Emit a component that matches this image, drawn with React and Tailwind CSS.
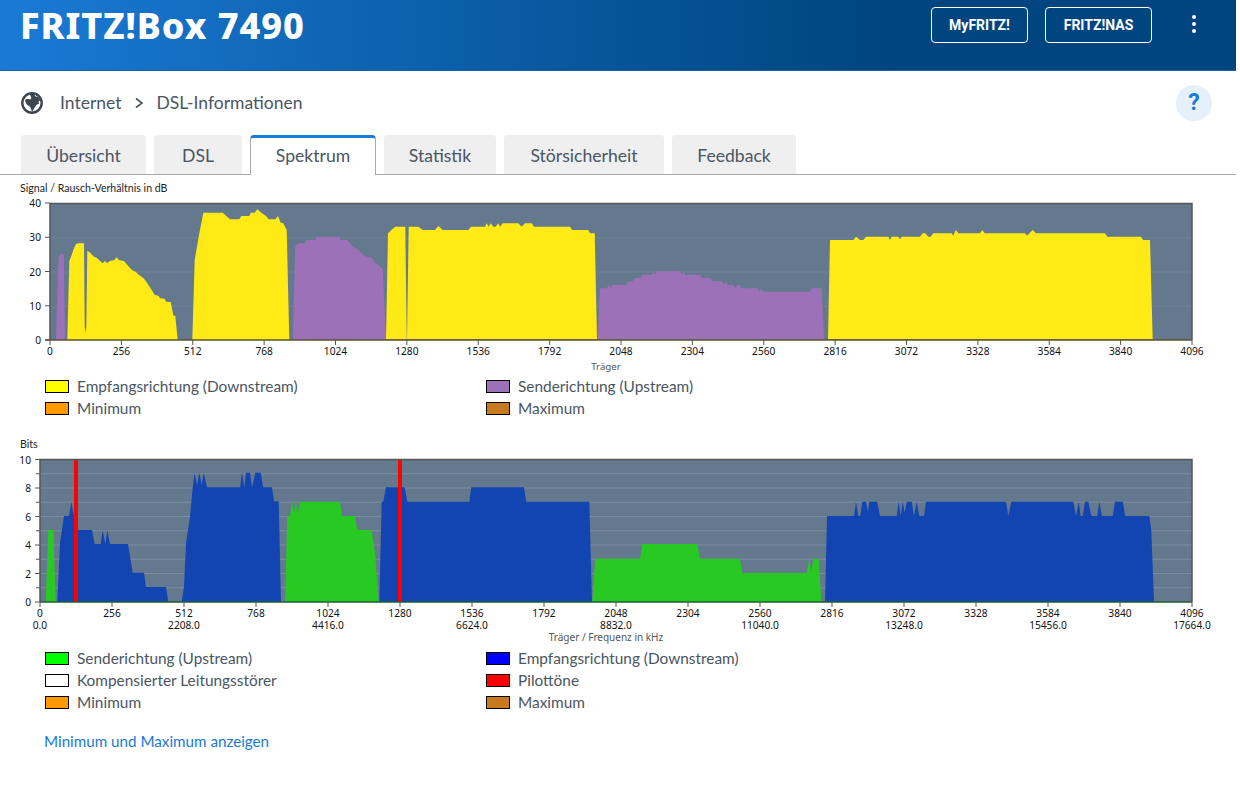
const z = (ox, oy, s) =>
  s.trim().split(/\s+/).map((p) => {
    const [x, y] = p.split(",").map(Number);
    return `${(ox + x / 3).toFixed(1)},${(oy + y / 3).toFixed(1)}`;
  }).join(" ");

const YEL = "#ffea16";
const PUR = "#9d71b8";
const BLU = "#1345b2";
const GRN = "#29c923";
const BG = "#64798e";
const GRID = "#7b8c9e";

const chart1 = [
  [PUR, z(0, 180, "168,480 176,230 182,222 191,222 195,480")],
  [YEL, z(0, 180, "202,480 208,243 214,228 222,205 228,192 234,190 252,190 254,440 257,460 259,440 262,212 268,216 274,222 282,230 290,233 298,241 308,250 314,243 322,249 330,243 342,241 350,232 358,241 372,243 382,255 396,270 408,276 414,283 430,294 438,304 450,322 464,344 476,348 480,355 494,356 498,365 512,366 520,406 526,408 533,480")],
  [YEL, z(0, 180, "577,480 584,240 596,170 610,98 668,98 690,118 718,118 724,108 748,108 752,98 764,98 772,88 786,100 798,108 806,118 826,118 834,108 842,128 850,130 860,150 868,480")],
  [PUR, z(0, 180, "878,480 886,200 892,192 900,190") + " " + z(300, 190, "0,160 15,160 20,150 45,150 50,140 118,140 122,150 140,150 160,170 175,180 190,195 200,200 215,203 225,220 235,224 248,238 258,448")],
  [YEL, z(300, 190, "258,448 264,130 272,122 285,110 316,110 320,448 321,448 326,110 355,110 368,120 405,120 415,108 428,120 505,120 513,110 555,110 560,100 566,110 572,100 580,110 587,110 595,100 600,110 608,100 655,100 665,110 675,100 695,100 702,110 810,110 817,120 865,120 870,130 884,130 891,448")],
  [PUR, z(300, 190, "893,448 900,295") + " " + z(600, 190, "0,295 20,295 27,285 33,292 38,285 78,285 85,274 98,274 105,264 122,264 128,254 155,254 160,246 165,254 172,244 240,244 246,254 250,246 256,254 300,254 305,264 332,264 338,274 365,274 372,284 377,276 384,285 400,286 406,295 412,285 420,285 425,295 472,295 478,305 483,297 492,305 630,305 636,295 665,295 672,448")],
  [YEL, z(600, 190, "684,448 690,150 760,150 768,140 780,150 790,150 798,140 865,140 870,150 875,140 895,140 900,148 905,140") + " " + z(900, 195, "0,125 60,125 68,115 76,115 85,125 92,125 100,115 155,115 160,122 167,105 175,115 240,115 247,105 254,115 375,115 381,122 398,105 408,115 615,115 622,125 722,125 730,135 750,135 758,433")],
];

const chart2 = [
  [GRN, z(0, 440, "137,486 145,270 160,270 167,486")],
  [BLU, z(0, 440, "172,486 180,310 192,228 207,228 214,185 222,228 234,270 276,270 284,312 302,312 308,270 316,312 322,270 330,312 384,312 398,398 432,398 438,441 498,441 505,486")],
  [BLU, z(0, 440, "545,486 552,440 558,310 570,230 578,142 584,98 591,135 598,98 605,135 611,98 621,142 720,142 726,98 733,142 738,98 750,98 756,142 766,98 782,98 790,142 816,142 822,184 836,184 843,486")],
  [GRN, z(0, 440, "855,486 862,228 870,228 876,185 882,218 888,185 894,218 900,185") + " " + z(300, 440, "0,185 120,185 126,228 165,228 172,270 215,270 225,340 236,486")],
  [BLU, z(300, 440, "238,486 245,185 250,185 258,142 314,142 322,185 508,185 514,142 672,142 679,185 868,185 876,486")],
  [GRN, z(580, 520, "37,246 46,116 180,116 187,72 352,72 360,116 480,116 487,159 680,159 687,118 694,155 700,116 716,116 724,246")],
  [BLU, z(800, 440, "75,486 81,228 162,228 168,185 175,228 181,228 187,185 198,185 204,215 208,185 232,185 240,228 290,228 296,185 302,228 308,185 314,218 320,185 335,185 342,228 350,185 358,228 372,228 378,185 618,185 625,228 634,185 820,185 828,228 836,185 842,228 848,228 855,185 865,185 874,228 892,228 898,185 906,228 938,228 945,185 968,185 976,228 1048,228 1054,270 1062,486")],
];

const AXIS_FONT = { fontFamily: "'Noto Sans', sans-serif", fontSize: 10.2, fill: "#111" };
const carriers = Array.from({ length: 17 }, (_, i) => i * 256);

function Chart1() {
  const top = 190;
  const X = (v) => 50 + (v / 4096) * 1142;
  const Y = (v) => 340 - v * 3.425;
  return (
    <svg width="1236" height="185" viewBox={`0 ${top} 1236 185`} className="block">
      <rect x="50" y="203" width="1142" height="137" fill={BG} />
      {[10, 20, 30].map((v) => (
        <line key={v} x1="50" x2="1192" y1={Y(v) + 0.5} y2={Y(v) + 0.5} stroke="#718497" />
      ))}
      {chart1.map(([c, p], i) => <polygon key={i} points={p} fill={c} />)}
      <path d="M50 340V203.5H1192V340" fill="none" stroke="#555" strokeWidth="1.5" />
      <line x1="45" x2="1192" y1="340" y2="340" stroke="#5b5330" strokeWidth="1.5" />
      {[0, 10, 20, 30, 40].map((v) => (
        <g key={v}>
          <line x1="45" x2="50" y1={Y(v)} y2={Y(v)} stroke="#555" />
          <text x="41" y={Y(v) + 4} textAnchor="end" style={AXIS_FONT}>{v}</text>
        </g>
      ))}
      {carriers.map((v) => (
        <g key={v}>
          <line x1={X(v)} x2={X(v)} y1="340" y2="345" stroke="#555" />
          <text x={X(v)} y="355" textAnchor="middle" style={AXIS_FONT}>{v}</text>
        </g>
      ))}
      <text x="606" y="370" textAnchor="middle" style={{ ...AXIS_FONT, fontSize: 9.7, fill: "#555" }}>Träger</text>
    </svg>
  );
}

function Chart2() {
  const top = 452;
  const X = (v) => 40 + (v / 4096) * 1152;
  const Y = (v) => 602 - v * 14.25;
  return (
    <svg width="1236" height="195" viewBox={`0 ${top} 1236 195`} className="block">
      <rect x="40" y="459" width="1152" height="143" fill={BG} />
      {[1, 2, 3, 4, 5, 6, 7, 8, 9].map((v) => (
        <line key={v} x1="40" x2="1192" y1={Y(v)} y2={Y(v)} stroke={GRID} />
      ))}
      {chart2.map(([c, p], i) => <polygon key={i} points={p} fill={c} />)}
      <rect x="74" y="459" width="4" height="143" fill="#ff0000" />
      <rect x="398" y="459" width="4" height="143" fill="#ff0000" />
      <path d="M40 602V459.5H1192V602" fill="none" stroke="#555" strokeWidth="1.5" />
      <line x1="40" x2="1192" y1="602" y2="602" stroke="#1d5c35" strokeWidth="1.5" />
      {[0, 1, 2, 3, 4, 5, 6, 7, 8, 9, 10].map((v) => (
        <line key={v} x1={v % 2 ? 36 : 35} x2="40" y1={Y(v)} y2={Y(v)} stroke="#555" />
      ))}
      {[0, 2, 4, 6, 8, 10].map((v) => (
        <text key={v} x="31" y={Y(v) + 4} textAnchor="end" style={AXIS_FONT}>{v}</text>
      ))}
      {carriers.map((v) => (
        <g key={v}>
          <line x1={X(v)} x2={X(v)} y1="602" y2="607" stroke="#555" />
          <text x={X(v)} y="617" textAnchor="middle" style={AXIS_FONT}>{v}</text>
        </g>
      ))}
      {carriers.filter((v) => v % 512 === 0).map((v) => (
        <text key={v} x={X(v)} y="629" textAnchor="middle" style={AXIS_FONT}>{(v * 4.3125).toFixed(1)}</text>
      ))}
      <text x="606" y="641" textAnchor="middle" style={{ ...AXIS_FONT, fontSize: 10, fill: "#555" }}>Träger / Frequenz in kHz</text>
    </svg>
  );
}

function Legend({ rows }) {
  return (
    <div className="grid grid-cols-[441px_1fr] pl-[45px] text-[15.4px] leading-[22px] text-[#4a5662]">
      {rows.map(([color, label]) => (
        <div key={label} className="flex items-center h-[22px]">
          <span className="w-[24px] h-[13px] border border-black shrink-0 mr-[8px]" style={{ backgroundColor: color }} />
          <span>{label}</span>
        </div>
      ))}
    </div>
  );
}

const tabs = [
  ["Übersicht", "w-[125px]"],
  ["DSL", "w-[88px]"],
  ["Spektrum", "w-[126px]"],
  ["Statistik", "w-[112px]"],
  ["Störsicherheit", "w-[160px]"],
  ["Feedback", "w-[124px]"],
];

export default function App() {
  return (
    <div className="w-[1236px] h-[794px] overflow-hidden bg-white font-['Lato',sans-serif] text-[#4a5662]">
      <header className="h-[71px] flex items-start justify-between bg-gradient-to-r from-[#1a7ad6] to-[#00457f] to-[72%] border-b border-[#1560a8]">
        <div className="pl-[20px] pt-[5px] text-[36px] leading-[42px] font-extrabold text-white font-['Noto_Sans',sans-serif] tracking-[0.95px]">FRITZ!Box 7490</div>
        <div className="flex items-center pt-[7px] pr-[38px]">
          <button className="w-[97px] h-[36px] rounded border border-white text-white text-[14px] font-bold font-['Roboto',sans-serif]">MyFRITZ!</button>
          <button className="ml-[17px] w-[107px] h-[36px] rounded border border-white text-white text-[14px] font-bold font-['Roboto',sans-serif]">FRITZ!NAS</button>
          <div className="ml-[38px] w-[8px] flex flex-col items-center gap-[3px] -mt-[2px]">
            <span className="w-[4px] h-[4px] rounded-full bg-white" />
            <span className="w-[4px] h-[4px] rounded-full bg-white" />
            <span className="w-[4px] h-[4px] rounded-full bg-white" />
          </div>
        </div>
      </header>

      <div className="h-[64px] flex items-center justify-between pl-[21px] pr-[24px]">
        <div className="flex items-center text-[17.5px]">
          <svg width="22" height="22" viewBox="0 0 22 22" className="mr-[17px]">
            <circle cx="11" cy="11" r="9.7" fill="#fff" stroke="#3d4650" strokeWidth="2.4" />
            <path d="M4 8 C6 6 8 8 10 7 C11 5 9 4 9 2 L14 2 C13 4 15 5 17 5 L20 9 C18 8 17 10 18 12 C16 12 15 13 14 15 C13 17 12 18 11 20 C10 18 10 15 8 14 C6 13 5 12 4 8Z" fill="#3d4650" />
          </svg>
          <span>Internet</span>
          <svg width="10" height="12" viewBox="0 0 10 12" className="ml-[13px] mr-[12px]">
            <path d="M2 1.5 L8 6 L2 10.5" fill="none" stroke="#4a5662" strokeWidth="1.6" />
          </svg>
          <span>DSL-Informationen</span>
        </div>
        <div className="w-[36px] h-[36px] rounded-full bg-[#e5f0fa] flex items-center justify-center text-[#1a7ad6] text-[23px] font-bold font-['Roboto',sans-serif]">?</div>
      </div>

      <nav className="h-[40px] flex items-end gap-[8px] pl-[21px] border-b border-[#aaaaaa]">
        {tabs.map(([t, w]) =>
          t === "Spektrum" ? (
            <div key={t} className={`${w} h-[40px] -mb-px bg-white border-x border-[#aaaaaa] border-t-[3px] border-t-[#1a7ad6] rounded-t flex items-center justify-center text-[17.6px] pb-[1px]`}>{t}</div>
          ) : (
            <div key={t} className={`${w} h-[39px] bg-[#efefef] rounded-t flex items-center justify-center text-[17.6px] pt-[3px]`}>{t}</div>
          )
        )}
      </nav>

      <div className="h-[15px] pl-[20px] pt-[6px] text-[10.6px] leading-[14px] text-[#222]">Signal / Rausch-Verhältnis in dB</div>
      <Chart1 />
      <Legend rows={[["#ffff00", "Empfangsrichtung (Downstream)"], ["#9d71b8", "Senderichtung (Upstream)"], ["#ff9900", "Minimum"], ["#c77a1e", "Maximum"]]} />

      <div className="h-[14px] mt-[19px] pl-[20px] text-[10.6px] leading-[12px] text-[#222]">Bits</div>
      <Chart2 />
      <Legend rows={[["#00ff00", "Senderichtung (Upstream)"], ["#0000ff", "Empfangsrichtung (Downstream)"], ["#ffffff", "Kompensierter Leitungsstörer"], ["#ff0000", "Pilottöne"], ["#ff9900", "Minimum"], ["#c77a1e", "Maximum"]]} />
      <a className="block mt-[17px] ml-[44px] text-[15.2px] leading-[22px] text-[#1a7ad6]">Minimum und Maximum anzeigen</a>
    </div>
  );
}
